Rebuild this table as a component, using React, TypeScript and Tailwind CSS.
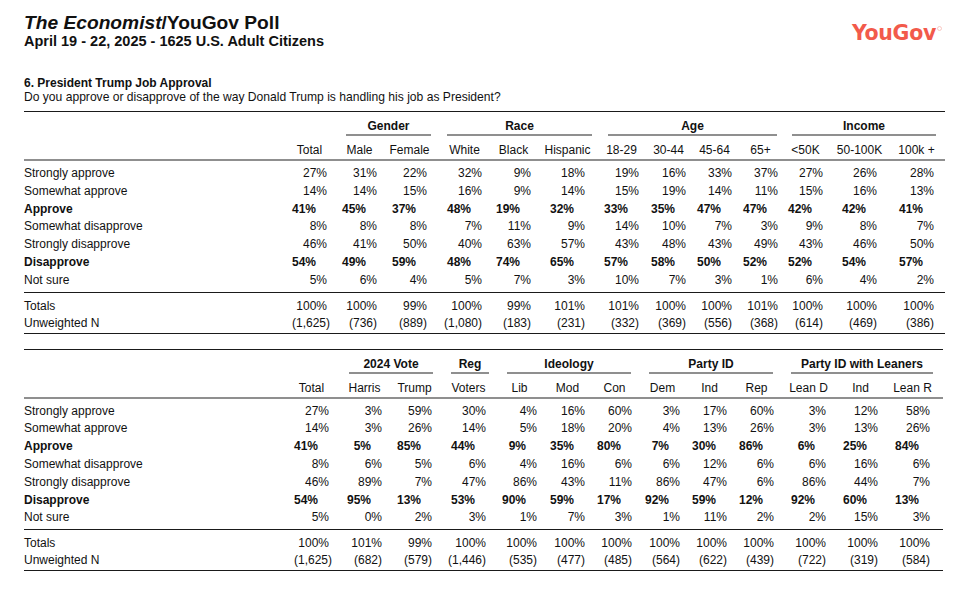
import React from 'react';

type Group = { label: string; span: string; inner: string };
type Row = { label: string; bold?: boolean; values: string[] };

interface TableProps {
  cols: string; // grid template, written out in full
  width: string;
  groups: Group[];
  headers: string[];
  rows: Row[];
  totals: string[];
  counts: string[];
}

const T1_COLS = 'grid-cols-[268px_35px_50px_50px_55px_49px_54px_54px_47px_46px_46px_45px_54px_57px_1fr]';
const T2_COLS = 'grid-cols-[270px_35px_53px_50px_54px_51px_48px_47px_48px_47px_47px_52px_52px_52px_1fr]';

const PollTable: React.FC<TableProps> = ({ cols, width, groups, headers, rows, totals, counts }) => {
  return (
    <div className={width}>
      <div className="h-px bg-[#1a1a1a]" />

      {/* Group labels with underline */}
      <div className={`grid ${cols} h-[24px]`}>
        <div />
        <div />
        {groups.map((g) => (
          <div key={g.label} className={g.span}>
            <div className={`${g.inner} h-full flex flex-col justify-between`}>
              <div className="pt-[6px] text-center font-bold leading-[16px] whitespace-nowrap">{g.label}</div>
              <div className="h-[2px] bg-[#8f8f8f]" />
            </div>
          </div>
        ))}
      </div>

      {/* Column headers */}
      <div className={`grid ${cols} h-[23px]`}>
        <div />
        {headers.map((h, i) => (
          <div key={i} className="flex justify-end pt-[6px] leading-[16px]">
            <div className="w-[35px] flex justify-center whitespace-nowrap">{h}</div>
          </div>
        ))}
      </div>
      <div className="h-[2px] bg-[#8f8f8f]" />

      <div className="pt-[4px]">
        {rows.map((r) => (
          <div key={r.label} className={`grid ${cols} h-[17.8px] leading-[17.8px] ${r.bold ? 'font-bold' : ''}`}>
            <div className="whitespace-nowrap">{r.label}</div>
            {r.values.map((v, i) => (
              <div key={i} className={r.bold ? 'text-right pr-[11px]' : 'text-right'}>
                {v}
              </div>
            ))}
          </div>
        ))}
      </div>

      <div className="mt-[2px] h-px bg-[#1a1a1a]" />

      <div className="pt-[5px]">
        <div className={`grid ${cols} h-[17px] leading-[17px]`}>
          <div>Totals</div>
          {totals.map((v, i) => (
            <div key={i} className="text-right">{v}</div>
          ))}
        </div>
        <div className={`grid ${cols} h-[17px] leading-[17px]`}>
          <div>Unweighted N</div>
          {counts.map((v, i) => (
            <div key={i} className="text-right whitespace-nowrap">{v}</div>
          ))}
        </div>
      </div>
      <div className="mt-[1px] h-px bg-[#1a1a1a]" />
    </div>
  );
};

const table1: TableProps = {
  cols: T1_COLS,
  width: 'w-[921px]',
  groups: [
    { label: 'Gender', span: 'col-span-2', inner: 'ml-[19px] -mr-[4px]' },
    { label: 'Race', span: 'col-span-3', inner: 'ml-[20px] -mr-[7px]' },
    { label: 'Age', span: 'col-span-4', inner: 'ml-[23px] mr-[1px]' },
    { label: 'Income', span: 'col-span-3', inner: 'ml-[14px] -mr-[2px]' },
  ],
  headers: ['Total', 'Male', 'Female', 'White', 'Black', 'Hispanic', '18-29', '30-44', '45-64', '65+', '<50K', '50-100K', '100k +'],
  rows: [
    { label: 'Strongly approve', values: ['27%', '31%', '22%', '32%', '9%', '18%', '19%', '16%', '33%', '37%', '27%', '26%', '28%'] },
    { label: 'Somewhat approve', values: ['14%', '14%', '15%', '16%', '9%', '14%', '15%', '19%', '14%', '11%', '15%', '16%', '13%'] },
    { label: 'Approve', bold: true, values: ['41%', '45%', '37%', '48%', '19%', '32%', '33%', '35%', '47%', '47%', '42%', '42%', '41%'] },
    { label: 'Somewhat disapprove', values: ['8%', '8%', '8%', '7%', '11%', '9%', '14%', '10%', '7%', '3%', '9%', '8%', '7%'] },
    { label: 'Strongly disapprove', values: ['46%', '41%', '50%', '40%', '63%', '57%', '43%', '48%', '43%', '49%', '43%', '46%', '50%'] },
    { label: 'Disapprove', bold: true, values: ['54%', '49%', '59%', '48%', '74%', '65%', '57%', '58%', '50%', '52%', '52%', '54%', '57%'] },
    { label: 'Not sure', values: ['5%', '6%', '4%', '5%', '7%', '3%', '10%', '7%', '3%', '1%', '6%', '4%', '2%'] },
  ],
  totals: ['100%', '100%', '99%', '100%', '99%', '101%', '101%', '100%', '100%', '101%', '100%', '100%', '100%'],
  counts: ['(1,625)', '(736)', '(889)', '(1,080)', '(183)', '(231)', '(332)', '(369)', '(556)', '(368)', '(614)', '(469)', '(386)'],
};

const table2: TableProps = {
  cols: T2_COLS,
  width: 'w-[919px]',
  groups: [
    { label: '2024 Vote', span: 'col-span-2', inner: 'ml-[20px] -mr-[1px]' },
    { label: 'Reg', span: 'col-span-1', inner: 'ml-[19px] -mr-[3px]' },
    { label: 'Ideology', span: 'col-span-3', inner: 'ml-[21px] mr-[1px]' },
    { label: 'Party ID', span: 'col-span-3', inner: 'ml-[17px] mr-[1px]' },
    { label: 'Party ID with Leaners', span: 'col-span-3', inner: 'ml-[17px] -mr-[3px]' },
  ],
  headers: ['Total', 'Harris', 'Trump', 'Voters', 'Lib', 'Mod', 'Con', 'Dem', 'Ind', 'Rep', 'Lean D', 'Ind', 'Lean R'],
  rows: [
    { label: 'Strongly approve', values: ['27%', '3%', '59%', '30%', '4%', '16%', '60%', '3%', '17%', '60%', '3%', '12%', '58%'] },
    { label: 'Somewhat approve', values: ['14%', '3%', '26%', '14%', '5%', '18%', '20%', '4%', '13%', '26%', '3%', '13%', '26%'] },
    { label: 'Approve', bold: true, values: ['41%', '5%', '85%', '44%', '9%', '35%', '80%', '7%', '30%', '86%', '6%', '25%', '84%'] },
    { label: 'Somewhat disapprove', values: ['8%', '6%', '5%', '6%', '4%', '16%', '6%', '6%', '12%', '6%', '6%', '16%', '6%'] },
    { label: 'Strongly disapprove', values: ['46%', '89%', '7%', '47%', '86%', '43%', '11%', '86%', '47%', '6%', '86%', '44%', '7%'] },
    { label: 'Disapprove', bold: true, values: ['54%', '95%', '13%', '53%', '90%', '59%', '17%', '92%', '59%', '12%', '92%', '60%', '13%'] },
    { label: 'Not sure', values: ['5%', '0%', '2%', '3%', '1%', '7%', '3%', '1%', '11%', '2%', '2%', '15%', '3%'] },
  ],
  totals: ['100%', '101%', '99%', '100%', '100%', '100%', '100%', '100%', '100%', '100%', '100%', '100%', '100%'],
  counts: ['(1,625)', '(682)', '(579)', '(1,446)', '(535)', '(477)', '(485)', '(564)', '(622)', '(439)', '(722)', '(319)', '(584)'],
};

export default function App() {
  return (
    <div className="w-[973px] min-h-[598px] bg-white text-[#111] text-[12px] font-['Liberation_Sans',Arial,sans-serif] pl-[24px]">
      <div className="flex justify-between items-start pr-[31px]">
        <div className="pt-[12px]">
          <div className="text-[19.2px] leading-[21px] font-bold">
            <span className="italic">The Economist</span>/YouGov Poll
          </div>
          <div className="text-[14.5px] leading-[16px] font-bold">April 19 - 22, 2025 - 1625 U.S. Adult Citizens</div>
        </div>
        {/* YouGov wordmark */}
        <div className="pt-[22px] flex items-start">
          <span className="font-['DejaVu_Sans',sans-serif] font-bold text-[20.5px] leading-[22px] tracking-[-0.3px] text-[#f25a4b]">
            YouGov
          </span>
          <svg width="5" height="5" viewBox="0 0 10 10" className="mt-[4px] ml-[1px]">
            <circle cx="5" cy="5" r="4" fill="none" stroke="#f5a89f" strokeWidth="1.2" />
          </svg>
        </div>
      </div>

      <div className="mt-[27px] font-bold leading-[14px]">6. President Trump Job Approval</div>
      <div className="leading-[14px] text-[12.1px]">Do you approve or disapprove of the way Donald Trump is handling his job as President?</div>

      <div className="mt-[7px]">
        <PollTable {...table1} />
      </div>
      <div className="mt-[15px]">
        <PollTable {...table2} />
      </div>
    </div>
  );
}
